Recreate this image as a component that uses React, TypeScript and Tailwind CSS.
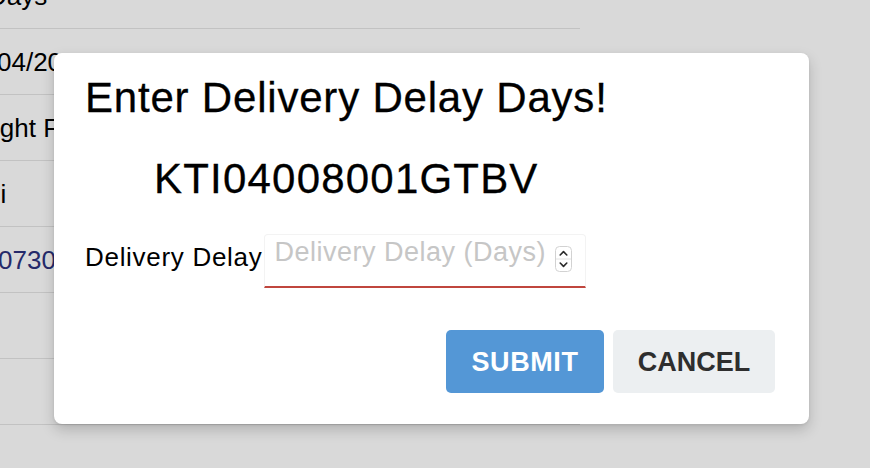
import React from 'react';

type Row = { text: string; offset: string; blue?: boolean };

// rows of the table that sits behind the dialog
const ROWS: Row[] = [
  { text: "Days", offset: "ml-[-12px]" },
  { text: "04/2022", offset: "ml-[-3px]" },
  { text: "Freight Forwarder", offset: "ml-[-45px]" },
  { text: "Delhi", offset: "ml-[-53px]" },
  { text: "0730145", offset: "ml-[-2px]", blue: true },
  { text: "", offset: "" },
  { text: "", offset: "" },
  { text: "", offset: "" },
];

const Spinner = () => (
  <svg width="17" height="26" viewBox="0 0 17 26" className="mt-[11px] mr-[13px] shrink-0">
    <rect x="0.5" y="0.5" width="16" height="25" rx="4" fill="#fff" stroke="#d2d2d2" />
    <line x1="1" y1="13" x2="16" y2="13" stroke="#e2e2e2" />
    <path d="M5.2 9 L8.5 5.6 L11.8 9" fill="none" stroke="#2a2a2a" strokeWidth="1.6" strokeLinecap="round" strokeLinejoin="round" />
    <path d="M5.2 17 L8.5 20.4 L11.8 17" fill="none" stroke="#2a2a2a" strokeWidth="1.6" strokeLinecap="round" strokeLinejoin="round" />
  </svg>
);

export default function App() {
  return (
    <div className="relative h-[468px] w-[870px] overflow-hidden bg-white font-['Liberation_Sans',Arial,sans-serif] text-black">
      {/* table in the background */}
      <div className="mt-[-37px] flex w-[580px] flex-col">
        {ROWS.map((row, i) => (
          <div key={i} className="flex h-[66px] items-end border-b border-[#e4e4e4] pb-[19px]">
            <span
              className={`${row.offset} whitespace-nowrap text-[26px] leading-none ${row.blue ? "text-[#2c327d]" : "text-black"}`}
            >
              {row.text}
            </span>
          </div>
        ))}
      </div>

      {/* backdrop + dialog */}
      <div className="absolute inset-0 flex items-start bg-black/15 pl-[54px] pt-[53px]">
        <div className="flex h-[371px] w-[755px] flex-col rounded-[8px] bg-white pb-[30px] pl-[31px] pr-[34px] pt-[24px] shadow-[0_6px_14px_rgba(0,0,0,0.18),0_1px_3px_rgba(0,0,0,0.08)]">
          <div className="w-fit">
            <h2 className="text-[42px] font-normal leading-none tracking-[0.8px] [-webkit-text-stroke:0.3px_black]">Enter Delivery Delay Days!</h2>
            <div className="mt-[39px] text-center text-[42px] leading-none tracking-[1.2px] [-webkit-text-stroke:0.3px_black]">KTI04008001GTBV</div>
          </div>

          <div className="mt-[34px] flex items-start">
            <label className="mt-[10px] whitespace-nowrap text-[26px] leading-none tracking-[0.7px]">Delivery Delay</label>
            <div className="ml-[2px] flex h-[54px] w-[322px] items-start rounded-t-[4px] border border-[#f3f3f3] border-b-2 border-b-[#c0463e]">
              <input
                type="text"
                placeholder="Delivery Delay (Days)"
                className="mt-[2px] h-[31px] min-w-0 flex-1 bg-transparent pl-[9px] text-[27px] leading-normal tracking-[0.5px] outline-none placeholder:text-[#c6c6c6]"
              />
              <Spinner />
            </div>
          </div>

          <div className="mt-[42px] flex justify-end gap-[9px]">
            <button className="h-[63px] w-[158px] rounded-[5px] bg-[#5497d6] pt-[2px] text-[27px] font-bold tracking-[0.6px] text-white">
              SUBMIT
            </button>
            <button className="h-[63px] w-[162px] rounded-[5px] bg-[#eceff1] pt-[2px] text-[27px] font-bold text-[#2e2e2e]">
              CANCEL
            </button>
          </div>
        </div>
      </div>
    </div>
  );
}
